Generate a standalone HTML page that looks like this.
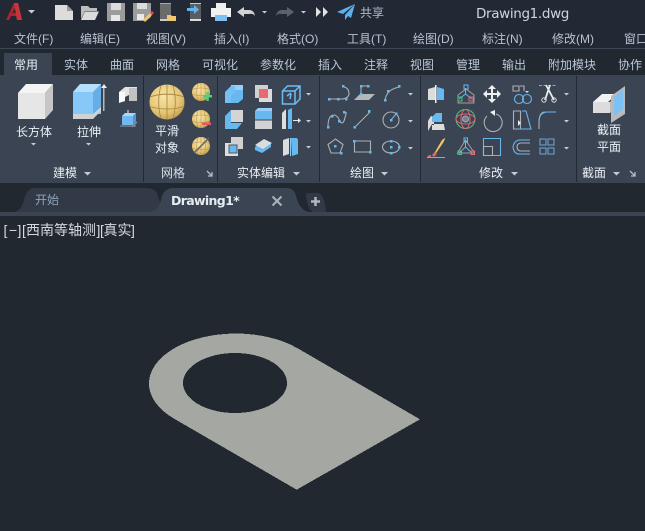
<!DOCTYPE html>
<html><head><meta charset="utf-8"><style>
html,body{margin:0;padding:0;background:#212830;width:645px;height:531px;overflow:hidden}
svg{display:block}
text{font-family:"Liberation Sans","Noto Sans CJK SC",sans-serif;font-size:12px}
.m{fill:#b9c3d1;font-size:13px}.t{fill:#b9c8d8}.w{fill:#e8edf2}
.s{fill:none;stroke:#adb1b6;stroke-width:1.1}.b{fill:none;stroke:#68b4ec;stroke-width:1.1}
</style></head><body>
<svg width="645" height="531" viewBox="0 0 645 531" xmlns="http://www.w3.org/2000/svg">
<defs>
<radialGradient id="gd" cx=".42" cy=".35" r=".75"><stop offset="0" stop-color="#f8e4a6"/><stop offset=".6" stop-color="#e6c676"/><stop offset="1" stop-color="#b8944a"/></radialGradient>
<g id="sp"><circle cx="0" cy="0" r="1" fill="url(#gd)"/><path d="M-.95-.3Q0-.6.95-.3M-1 .25Q0 .55 1 .25M-.35-.93Q-.6 0-.35.93M.35-.93Q.6 0 .35.93M0-1V1" fill="none" stroke="#a98a45" stroke-width=".05"/></g>
<path id="ar" d="M0 0h7l-3.500 3.500z" fill="#c8ccd2"/>
<path id="ars" d="M0 0h5l-2.500 2.500z" fill="#c8ccd2"/>
</defs>
<rect width="645" height="531" fill="#212830"/>
<rect width="645" height="48" fill="#222934"/>
<rect y="48" width="645" height="1" fill="#3c4655"/>

<!-- quick access -->
<path fill-rule="evenodd" d="M6 20 14 3h4l4 17h-5l-.7-4H11l-2 4zM12.500 13h3.300l-.8-5z" fill="#b3222c"/>
<path d="M14 3h4l4 17h-5z" fill="#c9343c"/>
<use href="#ar" x="28" y="10"/>
<path d="M55 5h12l6 6v9H55z" fill="#dcdcdc"/><path d="M67 5v6h6z" fill="#9a9a9a"/>
<path d="M81 19V6h7l2 2h7v3H85l-4 8z" fill="#bdbdbd"/><path d="M85 11.500h14L95 20H81z" fill="#dcdcdc"/>
<path d="M107 3h18v18h-18z" fill="#9c9c9c"/><rect x="111" y="3" width="10" height="7" fill="#dcdcdc"/><rect x="111" y="15" width="9" height="6" fill="#e8e8e8"/>
<path d="M133 3h18v14l-5 4h-13z" fill="#9c9c9c"/><rect x="137" y="3" width="10" height="6" fill="#dcdcdc"/><rect x="137" y="14" width="7" height="6" fill="#e8e8e8"/>
<path d="M143 20l7-7 2 2-7 7z" fill="#efc46a"/><path d="M150 13l2-2 2 2-2 2z" fill="#e2475a"/>
<rect x="160" y="4" width="11" height="16" fill="#6b6b6b"/><rect x="160" y="3" width="11" height="1" fill="#aaa"/><rect x="160" y="19" width="11" height="2" fill="#cfcfcf"/>
<path d="M167 21v-6h4l1 1h4v5z" fill="#f0c670"/>
<rect x="190" y="3" width="11" height="18" fill="#5a5e63"/><rect x="190" y="3" width="11" height="1" fill="#ccc"/><rect x="190" y="19" width="11" height="2" fill="#ddd"/>
<path d="M187 8h7v-3l5 4.500-5 4.500v-3h-7z" fill="#62b4ee"/>
<rect x="216" y="3" width="10" height="6" fill="#eee"/><rect x="211" y="8" width="20" height="9" fill="#f2f2f2"/><rect x="215" y="15" width="12" height="6" fill="#7cc1f3"/>
<path d="M237 12l7-5v3h5q5 0 6 6-2-3-6-2h-5v3z" fill="#d4d4d4"/><use href="#ars" x="262" y="11"/>
<path d="M294 12l-7-5v3h-5q-5 0-6 6 2-3 6-2h5v3z" fill="#5c626b"/><use href="#ars" x="301" y="11"/>
<path d="M316 7l5 5-5 5zM323 7l5 5-5 5z" fill="#e2e2e2"/>
<path d="M355 4 337 12l6 2zM355 4 345 15v5l3-4 3 2z" fill="#5bb2ee"/>
<text x="360" y="17" style="font-size:12px;fill:#aebccb">共享</text>
<text x="476" y="18" style="font-size:13.5px;fill:#ccd6e0;font-family:'DejaVu Sans',sans-serif;letter-spacing:-.35px">Drawing1.dwg</text>

<!-- menu -->
<g class="m"><text x="14" y="43">文件(F)</text><text x="80" y="43">编辑(E)</text><text x="146" y="43">视图(V)</text><text x="214" y="43">插入(I)</text><text x="277" y="43">格式(O)</text><text x="347" y="43">工具(T)</text><text x="413" y="43">绘图(D)</text><text x="482" y="43">标注(N)</text><text x="552" y="43">修改(M)</text><text x="624" y="43">窗口</text></g>

<!-- ribbon tabs -->
<rect x="4" y="53" width="48" height="22" fill="#3b4453"/>
<rect y="75" width="645" height="108" fill="#3b4453"/>
<text x="14" y="69" class="w">常用</text>
<g class="t"><text x="64" y="69">实体</text><text x="110" y="69">曲面</text><text x="156" y="69">网格</text><text x="202" y="69">可视化</text><text x="260" y="69">参数化</text><text x="318" y="69">插入</text><text x="364" y="69">注释</text><text x="410" y="69">视图</text><text x="456" y="69">管理</text><text x="502" y="69">输出</text><text x="548" y="69">附加模块</text><text x="618" y="69">协作</text></g>
<path d="M143.500 76v106M217.500 76v106M319.500 76v106M420.500 76v106M576.500 76v106" stroke="#222934" stroke-width="1"/>

<!-- box -->
<path d="M18 93h27v26H18z" fill="#e6e6e6"/><path d="M18 93l8-9h27l-8 9z" fill="#f4f4f4"/><path d="M45 93l8-9v26l-8 9z" fill="#c6c6c6"/>
<!-- extrude -->
<path d="M73 92h28v22H73z" fill="#86c8f8"/><path d="M73 92l7-8h21v8z" fill="#b4e0fc"/><path d="M93 92l8-8v23l-8 7z" fill="#66aee6"/><path d="M73 114h20l8-7v4l-8 8H73z" fill="#cfd2d4"/>
<rect x="103" y="87" width="1.500" height="24" fill="#b8b8b8"/><path d="M104 84l3 4h-6z" fill="#eee"/>
<path d="M119 92l6-5h12v14h-8v-6l-4 2v4l-6 1z" fill="#e4e4e4"/><path d="M119 92h6v9l-6 2z" fill="#fafafa"/><path d="M129 88h8v13h-8z" fill="#c2c2c2"/>
<path d="M122 116h11v9h-11z" fill="#72b8f0"/><path d="M122 116l3-3h11l-3 3z" fill="#a6d8fa"/><path d="M133 116l3-3v9l-3 3z" fill="#4d98d4"/><path d="M128 113v-3" stroke="#eee"/><path d="M120 126h16M132 127l5-5" stroke="#999"/>
<g fill="#eaf0f6"><text x="16" y="136">长方体</text><text x="77" y="136">拉伸</text><text x="155" y="135">平滑</text><text x="155" y="152">对象</text></g>
<use href="#ars" x="31" y="143"/><use href="#ars" x="86" y="143"/>

<!-- spheres -->
<use href="#sp" transform="translate(167 102) scale(17.500)"/>
<use href="#sp" transform="translate(201 92) scale(9)"/>
<rect x="203" y="95" width="9" height="2.500" fill="#4fd17c"/><rect x="206.300" y="92" width="2.500" height="9" fill="#4fd17c"/>
<use href="#sp" transform="translate(201 119) scale(9)"/><rect x="202" y="122.500" width="9" height="2.500" fill="#e65a64"/>
<use href="#sp" transform="translate(201 146) scale(9)"/><path d="M194 153l15-15" stroke="#5d6470" stroke-width="1.500"/>

<!-- solid edit -->
<path d="M225 94l6-5h12v10l-5 4h-13z" fill="#68b8f0"/><path d="M231 85h12v5h-12z" fill="#9ad0f8"/><path d="M225 92l6-6h4v6l-4 4v7h-6z" fill="#74c0f6"/>
<path d="M255 85h13v13h-13z" fill="#d0d0d0"/><path d="M259 89h13v13h-13z" fill="#dcdcdc"/><rect x="259" y="89" width="9" height="9" fill="#e86a70"/>
<path d="M282.500 91l5-5h12.500v13l-5 5h-12.500zM282.500 91h12.500v13M295 91l5-5M287 96l4-3M290 99l1-5" fill="none" stroke="#6cbcf4" stroke-width="1.500"/>
<use href="#ars" x="306" y="93"/>
<path d="M231 110h12v12h-12z" fill="#d4d4d4"/><path d="M231 110l-6 6v13h12l5-6h-11z" fill="#68b8f0"/>
<rect x="255" y="111" width="17" height="9" fill="#68b8f0"/><path d="M255 111l3-3h14v3z" fill="#9ad0f8"/><rect x="255" y="120" width="17" height="9" fill="#d2d2d2"/><rect x="255" y="119.500" width="17" height="1" fill="#3b4453"/>
<path d="M282 113l4-4v20h-4z" fill="#dedede"/><path d="M288 110l4-2v21h-4z" fill="#68b8f0"/><path d="M293 120h5v-2l3 2.500-3 2.500v-2h-5z" fill="#e8e8e8"/><use href="#ars" x="306" y="120"/>
<rect x="225" y="143" width="13" height="13" fill="#dedede"/><rect x="231" y="137" width="12" height="12" fill="#d0d0d0"/><rect x="229" y="145" width="8" height="8" fill="#68b8f0" stroke="#4e5866"/>
<path d="M255 147l9-6 7 3v3l-9 6-7-3z" fill="#68b8f0"/><path d="M255 145l9-6 8 4-9 6z" fill="#dcdcdc"/>
<path d="M283 140l6-2v16l-6 2z" fill="#dcdcdc"/><path d="M291 138h6l1 2v14l-6 2z" fill="#68b8f0"/><rect x="290" y="138" width="1" height="18" fill="#8cc8f8"/><use href="#ars" x="306" y="146"/>

<!-- draw -->
<path class="s" d="M329 99h12q7 0 8-5 0-6-5-7"/><path d="M328 98h2.500v2.500h-2.500zM337 98h2.500v2.500h-2.500zM345 98h2.500v2.500h-2.500zM342 85h2.500v2.500h-2.500z" fill="#68b8f0"/>
<path d="M354 100l6-6h15l-6 6z" fill="#b4b8bc"/><path class="s" d="M361 94V86h7"/><path d="M360 85h2.500v2.500h-2.500zM367 85h2.500v2.500h-2.500zM360 93h2.500v2.500h-2.500z" fill="#68b8f0"/>
<path class="s" d="M385 101q1-12 15-14"/><path d="M384 99h2.500v2.500h-2.500zM387 90h2.500v2.500h-2.500zM398 85h2.500v2.500h-2.500z" fill="#68b8f0"/>
<use href="#ars" x="408" y="93"/>
<path class="s" d="M328 127q0-12 6-12 3 0 6 6 2 4 4 0l2-7 0-2"/><path d="M327 126h2.500v2.500h-2.500zM331 115h2.500v2.500h-2.500zM338 120h2.500v2.500h-2.500zM343 111h2.500v2.500h-2.500z" fill="#68b8f0"/>
<path class="s" d="M355 127l15-15"/><path d="M353.500 126h2.500v2.500h-2.500zM368 110h2.500v2.500h-2.500z" fill="#68b8f0"/>
<circle class="s" cx="391" cy="120" r="8"/><path class="b" d="M391 120l5-6"/><path d="M390 119h2.500v2.500h-2.500zM395 112.500h2.500v2.500h-2.500z" fill="#68b8f0"/><use href="#ars" x="408" y="120"/>
<path class="s" d="M335.500 139l7.500 5.500-3 8.500h-9l-3-8.500z"/><rect x="334" y="145" width="2.500" height="2.500" fill="#68b8f0"/><rect x="340" y="152" width="2.500" height="2.500" fill="#68b8f0"/>
<path class="s" d="M354.500 141h16v11h-16z"/><path d="M353 140h2.500v2.500h-2.500zM369 151h2.500v2.500h-2.500z" fill="#68b8f0"/>
<ellipse class="s" cx="391" cy="147" rx="8.500" ry="6"/><path d="M390 146h2.500v2.500h-2.500zM390 140h2.500v2.500h-2.500zM390 152h2.500v2.500h-2.500zM398 146h2.500v2.500h-2.500z" fill="#68b8f0"/><use href="#ars" x="408" y="147"/>

<!-- modify -->
<path d="M428 89l7-2v13h-7z" fill="#dcdcdc"/><path d="M437 87l7 2v11h-7z" fill="#68b8f0"/><rect x="435" y="85" width="1.500" height="18" fill="#f0f0f0"/>
<path d="M458 95l8-6 8 6v8h-16z" fill="none" stroke="#9da1a6"/><path d="M459 99l6.500-5v-6M472 99l-6.500-5" fill="none" stroke="#68b8f0"/><rect x="464" y="85" width="4" height="4" fill="none" stroke="#68b8f0"/><rect x="458" y="97" width="4" height="4" fill="none" stroke="#52c279"/><rect x="469" y="97" width="4" height="4" fill="none" stroke="#e86a70"/>
<path d="M492 85l4 4h-3v4h4v-3l4 4-4 4v-3h-4v4h3l-4 4-4-4h3v-4h-4v3l-4-4 4-4v3h4v-4h-3z" fill="#eceef0"/>
<path class="s" d="M513 86h6v5h-6zM524 91v-5h-4"/><circle class="b" cx="519" cy="99" r="4.500"/><circle class="b" cx="527" cy="99" r="4.500"/><path d="M525 91l2 2 2-2z" fill="#ddd"/>
<path d="M539 85.500h17" stroke="#68b4ec" stroke-dasharray="3 1.500"/><path d="M546 85l8 15M550 85l-5 15" stroke="#ececec" stroke-width="1.800" fill="none"/><circle cx="544" cy="100" r="2.200" fill="none" stroke="#ddd"/><circle cx="554" cy="100" r="2.200" fill="none" stroke="#ddd"/><use href="#ars" x="564" y="93"/>
<path d="M428 131v-10l3-5 3 1v13h10v-6h-12" fill="#dcdcdc"/><path d="M432 125h12l1 5h-13z" fill="#dcdcdc"/><path d="M432 117l4-4h6v9h-10z" fill="#68b8f0"/>
<circle cx="465.500" cy="119" r="9.500" fill="none" stroke="#52c279"/><ellipse cx="465.500" cy="119" rx="9.500" ry="5" fill="none" stroke="#e06670"/><ellipse cx="465.500" cy="119" rx="4.500" ry="9.500" fill="none" stroke="#e06670"/><circle cx="465.500" cy="119" r="3" fill="#78808c" stroke="#aab"/>
<path class="s" d="M496 114a9 9 0 1 1-9 2"/><path d="M490 112l5-2v6z" fill="#eee"/>
<path class="s" d="M513.500 111h7v18h-7z"/><path class="b" d="M522 111h4l5 18h-13"/><path d="M518 123v-3l3 3-3 3z" fill="#eee"/>
<path class="s" d="M539 129v-6q0-11 6-11"/><path class="b" d="M539 122q0-10 9-10h8"/><use href="#ars" x="564" y="120"/>
<path d="M435 152l-3 3 2 1 9-13 2-4v-1l-3 2z" fill="#f2c666"/><path d="M429 155h2v2h-4zM432 155l3-3 2 2-3 3z" fill="#e2606a"/><rect x="427" y="157" width="18" height="1" fill="#68b8f0"/>
<path d="M465.500 140l9 13h-17z" fill="none" stroke="#9da1a6"/><path d="M465.500 140v7M459 153l6.500-6 6.500 6" fill="none" stroke="#68b8f0"/><rect x="464" y="138" width="3.500" height="4" fill="none" stroke="#68b8f0"/><rect x="458" y="151" width="3.500" height="3.500" fill="none" stroke="#52c279"/><rect x="471" y="151" width="3.500" height="3.500" fill="none" stroke="#e86a70"/>
<path class="b" d="M483.500 138.500h17v17h-17z"/><path class="s" d="M483.500 146.500h9v9h-9z"/>
<path class="b" d="M530 140h-11q-5 1-6 7 1 7 6 7h11"/><path class="s" d="M530 143h-10q-3 1-3 4 0 3 3 4h10"/>
<g fill="none" stroke="#6fa9d4"><rect x="540" y="139" width="6" height="6"/><rect x="548" y="139" width="6" height="6"/><rect x="540" y="148" width="6" height="6"/><rect x="548" y="148" width="6" height="6"/></g><use href="#ars" x="564" y="147"/>

<!-- section plane -->
<path d="M593 102l9-8h15l-9 8z" fill="#f2f2f2"/><rect x="593" y="102" width="17" height="11" fill="#dcdcdc"/><path d="M610 102l8-8v11l-8 8z" fill="#bdbdbd"/>
<path d="M611 96l14-10v28l-14 9z" fill="#b8babc"/><path d="M614 97l9-7v19l-9 7z" fill="#7cc1f3"/>
<text x="597" y="134" fill="#eaf0f6">截面</text><text x="597" y="151" fill="#eaf0f6">平面</text>

<!-- panel labels -->
<g fill="#eaeef2"><text x="53" y="177">建模</text><text x="161" y="177" fill="#d8dee6">网格</text><text x="237" y="177">实体编辑</text><text x="350" y="177">绘图</text><text x="479" y="177">修改</text><text x="582" y="177">截面</text></g>
<use href="#ar" x="84" y="172"/><use href="#ar" x="293" y="172"/><use href="#ar" x="381" y="172"/><use href="#ar" x="511" y="172"/><use href="#ar" x="613" y="172"/>
<path d="M207 171l5 5M212 172v4h-4" stroke="#b8bec6" fill="none" stroke-width="1.300"/><path d="M630 171l5 5M635 172v4h-4" stroke="#b8bec6" fill="none" stroke-width="1.300"/>

<!-- doc tabs -->
<rect y="183" width="645" height="29" fill="#212830"/>
<path d="M14 212q7-1 10-12 2-11 10-12h112q10 0 12 8 2 8 7 16z" fill="#323a48"/>
<path d="M150 212q8-1 11-12 2-11 11-12h115q7 0 9 8 3 13 12 16z" fill="#3b4453"/>
<path d="M306 194q0-1 2-1h10q6 0 8 19h-12q-7-2-8-18z" fill="#323a48"/>
<text x="35" y="204" style="fill:#8ea4b8;font-size:12px">开始</text>
<text x="171" y="205" style="font-size:12.5px;font-weight:bold;fill:#e6ecf2;font-family:'DejaVu Sans',sans-serif;letter-spacing:-.65px">Drawing1*</text>
<path d="M272.500 196.500l9 9M281.500 196.500l-9 9" stroke="#aab2bc" stroke-width="2"/>
<path d="M315.500 197v9M311 201.500h9" stroke="#b2b8c0" stroke-width="2.500"/>
<rect y="212" width="645" height="4" fill="#3b4453"/>

<!-- viewport -->
<g style="fill:#d6dade"><text x="3.500" y="235" style="font-size:14px">[</text><text x="9" y="235" style="font-size:14px">−</text><text x="17.500" y="235" style="font-size:14px">]</text><text x="22" y="235" style="font-size:14px">[</text><text x="26" y="235" style="font-size:14px">西南等轴测</text><text x="96.500" y="235" style="font-size:14px">]</text><text x="100" y="235" style="font-size:14px">[</text><text x="103.500" y="235" style="font-size:14px">真实</text><text x="131" y="235" style="font-size:14px">]</text></g>
<path fill-rule="evenodd" shape-rendering="crispEdges" fill="#a5a7a3" d="M296.600 347.700 420 419.300 296.700 489.700 173.400 418.300A87 50 0 0 1 296.600 347.700ZM183 383A52 30 0 1 0 287 383 52 30 0 1 0 183 383Z"/>
</svg>
</body></html>
